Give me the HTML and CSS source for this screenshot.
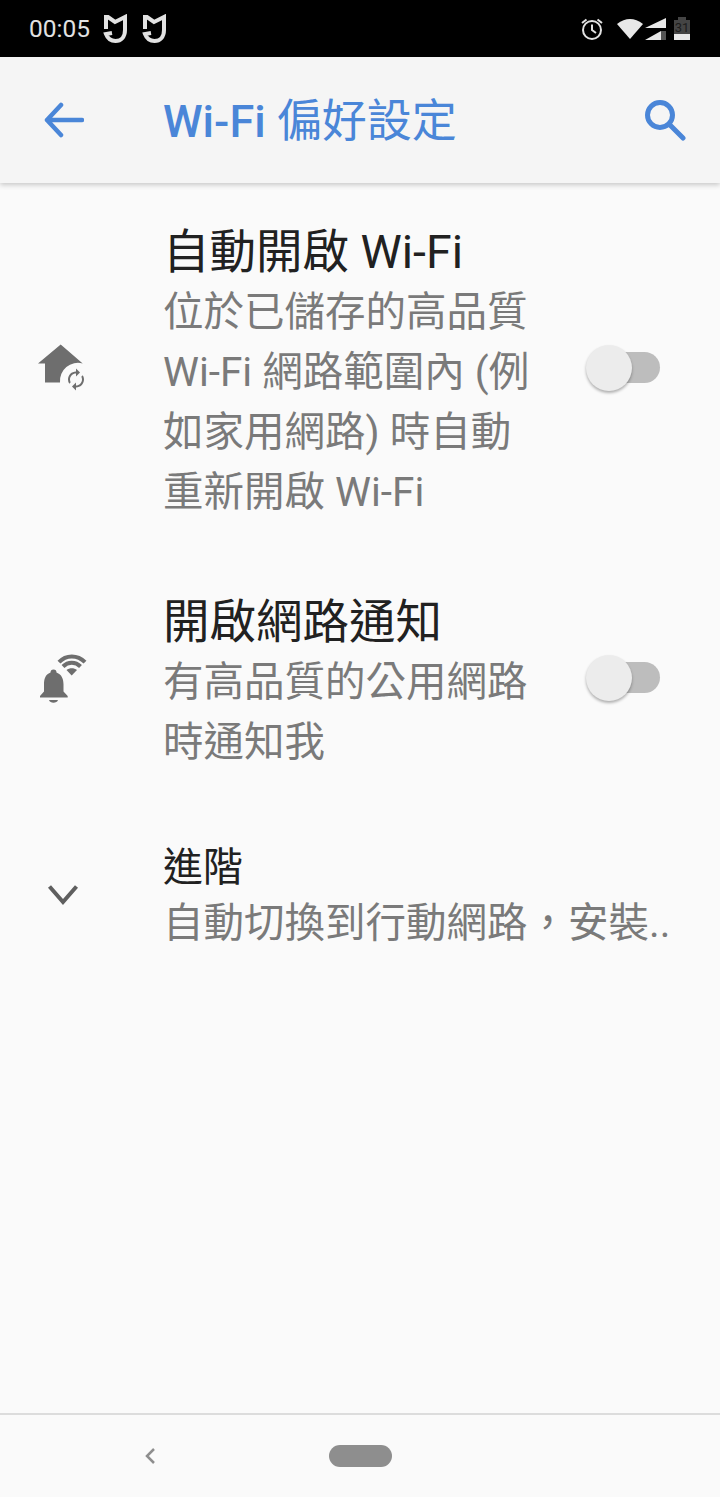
FILE: index.html
```html
<!DOCTYPE html>
<html lang="zh-Hant">
<head>
    <meta charset="UTF-8">
    <meta name="viewport" content="width=device-width, initial-scale=1.0">
    <title>Wi-Fi 偏好設定</title>
    <link rel="stylesheet" href="styles.css">
</head>
<body>
    <div class="status-bar">
        <div class="status-left">
            <span class="time">00:05</span>
            <svg class="mi" viewBox="0 0 28 30"><path d="M5 15 V3 H7 L14 8 L24 3 V16 C24 23 20 27 14.500 27 C10 27 6.500 24 5 20 L11 19" /></svg>
            <svg class="mi" viewBox="0 0 28 30"><path d="M5 15 V3 H7 L14 8 L24 3 V16 C24 23 20 27 14.500 27 C10 27 6.500 24 5 20 L11 19" /></svg>
        </div>
        <div class="status-right">
            <svg class="alarm" viewBox="0 0 24 24"><circle cx="12" cy="13" r="9" /><path d="M12 7.500 V13 L16 16 M2 6 L6.500 2.500 M22 6 L17.500 2.500" /></svg>
            <svg class="wifi" viewBox="0 0 26 20"><path d="M0 5 Q13 -5 26 5 L13 20 Z" /></svg>
            <svg class="signal" viewBox="0 0 21 22"><path class="signal-on" d="M21 0 V10 H0 Z M16 13 V22 H0 Z" /><path class="signal-off" d="M16 13 H21 V22 H16 Z" /></svg>
            <div class="battery">
                <span class="battery-num">31</span>
            </div>
        </div>
    </div>

    <header class="app-bar">
        <svg class="back" viewBox="0 0 40 36"><path d="M38 18 H3 M17 3 L3 18 L17 33" /></svg>
        <h1><span class="wifi-word">Wi-Fi</span> 偏好設定</h1>
        <svg class="search" viewBox="0 0 42 42"><circle cx="16" cy="16" r="12.500" /><path d="M25 25 L39 39" /></svg>
    </header>

    <main class="list">
        <div class="row row-auto">
            <svg class="row-icon" viewBox="33 342.500 60 60">
                <path d="M38 363 L60.700 344 L82.700 363 A18 18 0 0 0 60 382 H45 V363 Z" />
                <path transform="translate(88 367) scale(-1 1)" d="M12 4V1L8 5l4 4V6c3.310 0 6 2.690 6 6 0 1.010-.25 1.970-.7 2.800l1.460 1.460C19.540 15.030 20 13.570 20 12c0-4.420-3.580-8-8-8zm0 14c-3.310 0-6-2.690-6-6 0-1.010.25-1.970.7-2.800L5.240 7.740C4.460 8.970 4 10.430 4 12c0 4.420 3.580 8 8 8v3l4-4-4-4v3z" />
            </svg>
            <div class="row-text">
                <div class="row-title">自動開啟 Wi-Fi</div>
                <div class="row-summary">位於已儲存的高品質<br>Wi-Fi 網路範圍內 (例<br>如家用網路) 時自動<br>重新開啟 Wi-Fi</div>
            </div>
            <div class="switch"><span class="thumb"></span></div>
        </div>

        <div class="row row-notify">
            <svg class="row-icon" viewBox="33 652.500 60 60">
                <path d="M53.500 669 a3 3 0 0 1 3 3 C62 674 63.500 679 63.500 684 V691 L67.700 695.500 V697 H40 V695.500 L44 691 V684 C44 679 45 674 50.500 672 a3 3 0 0 1 3 -3 Z M49 699.500 H58 C57 703 50 703 49 699.500 Z" />
                <path d="M71.700 675 L66.500 669.500 C69.500 667 74 667 77 669.500 Z" />
                <path class="wave" d="M63 666 C68 661 75.500 661 80.500 666 M59 661.700 C66 654 77.500 654 85 661.700" />
            </svg>
            <div class="row-text">
                <div class="row-title">開啟網路通知</div>
                <div class="row-summary">有高品質的公用網路<br>時通知我</div>
            </div>
            <div class="switch"><span class="thumb"></span></div>
        </div>

        <div class="row row-advanced">
            <svg class="row-icon chevron" viewBox="33 867.500 60 60"><path d="M49.500 886 L63 901.500 L76.500 886" /></svg>
            <div class="row-text">
                <div class="row-title small">進階</div>
                <div class="row-summary">自動切換到行動網路，安裝..</div>
            </div>
        </div>
    </main>

    <footer class="nav-bar">
        <svg class="nav-back" viewBox="0 0 12 18"><path d="M10 2 L3 9 L10 16" /></svg>
        <span class="nav-home"></span>
    </footer>
</body>
</html>
```

FILE: styles.css
```css
* {
    margin: 0;
    padding: 0;
    box-sizing: border-box;
}

body {
    font-family: Roboto, "Noto Sans CJK TC", sans-serif;
    background: #fafafa;
    height: 100vh;
    display: flex;
    flex-direction: column;
    overflow: hidden;
}

/* status bar */
.status-bar {
    height: 57px;
    background: #000;
    display: flex;
    justify-content: space-between;
    align-items: center;
    padding: 0 30px 0 29px;
    flex-shrink: 0;
}

.status-left {
    display: flex;
    align-items: center;
}

.status-right {
    display: flex;
    align-items: center;
}

.time {
    color: #e2e2e2;
    font-size: 24.500px;
    margin-right: 11px;
}

.mi {
    width: 28px;
    height: 30px;
    margin-right: 11px;
    fill: none;
    stroke: #e2e2e2;
    stroke-width: 4;
}

.alarm {
    width: 24px;
    height: 24px;
    margin-right: 13px;
    fill: none;
    stroke: #e2e2e2;
    stroke-width: 2;
}

.wifi {
    width: 26px;
    height: 20px;
    fill: #e8e8e8;
    margin-right: 2px;
}

.signal {
    width: 21px;
    height: 22px;
    margin-right: 8px;
}

.signal-on {
    fill: #e8e8e8;
}

.signal-off {
    fill: #555;
}

.battery {
    width: 16px;
    height: 20px;
    margin-top: 3px;
    background: linear-gradient(#444 0 14px, #e8e8e8 14px);
    position: relative;
    text-align: center;
}

.battery::before {
    content: "";
    position: absolute;
    left: 4px;
    top: -3px;
    width: 8px;
    height: 3px;
    background: #444;
}

.battery-num {
    color: #1c1c1c;
    font-size: 13px;
    line-height: 16px;
    display: block;
}

/* app bar */
.app-bar {
    height: 126px;
    background: #f5f5f5;
    box-shadow: 0 2px 5px rgba(0,0,0,0.2);
    display: flex;
    align-items: center;
    flex-shrink: 0;
    position: relative;
}

.app-bar h1 {
    font-size: 45px;
    font-weight: 400;
    color: #4a86d8;
    line-height: 60px;
    padding-top: 4px;
    flex: 1;
}

.wifi-word {
    font-weight: 500;
}

.back {
    width: 40px;
    height: 36px;
    margin: 0 79px 0 44px;
    fill: none;
    stroke: #4a86d8;
    stroke-width: 4.500;
    stroke-linecap: round;
    stroke-linejoin: round;
}

.search {
    width: 42px;
    height: 42px;
    margin-right: 34px;
    fill: none;
    stroke: #4a86d8;
    stroke-width: 5;
    stroke-linecap: round;
}

/* list */
.list {
    flex: 1;
}

.row {
    display: flex;
    align-items: center;
}

.row-auto {
    margin-top: 40px;
}

.row-notify {
    margin-top: 71px;
}

.row-advanced {
    margin-top: 70px;
}

.row-icon {
    width: 60px;
    height: 60px;
    margin: 0 70px 0 33px;
    fill: #6e6e6e;
    flex-shrink: 0;
}

.row-icon .wave {
    fill: none;
    stroke: #6e6e6e;
    stroke-width: 4;
}

.chevron path {
    fill: none;
    stroke: #5f5f5f;
    stroke-width: 4;
}

.row-text {
    flex: 1;
}

.row-title {
    font-size: 46.500px;
    line-height: 59px;
    color: #212121;
}

.row-title.small {
    font-size: 40px;
    line-height: 51px;
}

.row-summary {
    font-size: 40.500px;
    line-height: 60px;
    color: #7a7a7a;
    white-space: nowrap;
}

.switch {
    width: 70px;
    height: 31px;
    background: #bdbdbd;
    border-radius: 16px;
    margin: 0 60px 10px 26px;
    position: relative;
    flex-shrink: 0;
}

.thumb {
    position: absolute;
    left: -4px;
    top: -7px;
    width: 46px;
    height: 46px;
    border-radius: 50%;
    background: #ececec;
    box-shadow: 0 2px 3px rgba(0,0,0,0.3);
}

/* nav bar */
.nav-bar {
    height: 84px;
    border-top: 2px solid #dcdcdc;
    flex-shrink: 0;
    position: relative;
    display: flex;
    align-items: center;
}

.nav-back {
    width: 12px;
    height: 18px;
    margin-left: 144px;
    fill: none;
    stroke: #8e8e8e;
    stroke-width: 2.500;
}

.nav-home {
    width: 63px;
    height: 22px;
    border-radius: 11px;
    background: #8e8e8e;
    margin-left: 173px;
}
```
